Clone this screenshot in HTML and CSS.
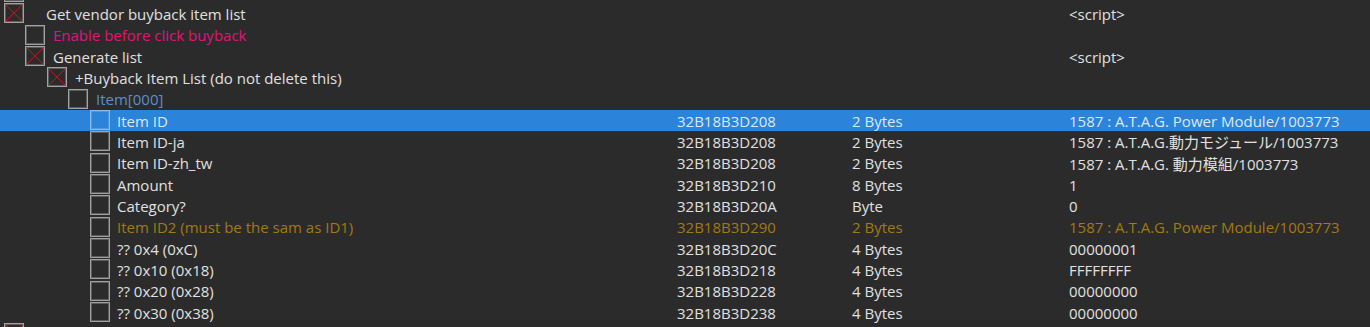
FILE: index.html
```html
<!DOCTYPE html>
<html>
<head>
<meta charset="utf-8">
<link rel="stylesheet" href="styles.css">
</head>
<body>
<div class="view">
  <div class="list">
    <div class="row lv0"><div class="desc"><span class="cb"></span></div><div class="addr"></div><div class="type"></div><div class="val"></div></div>
    <div class="row lv0"><div class="desc"><span class="cb on"></span><span class="name">Get vendor buyback item list</span></div><div class="addr"></div><div class="type"></div><div class="val">&lt;script&gt;</div></div>
    <div class="row lv1"><div class="desc"><span class="cb"></span><span class="name pink">Enable before click buyback</span></div><div class="addr"></div><div class="type"></div><div class="val"></div></div>
    <div class="row lv1"><div class="desc"><span class="cb on"></span><span class="name">Generate list</span></div><div class="addr"></div><div class="type"></div><div class="val">&lt;script&gt;</div></div>
    <div class="row lv2"><div class="desc"><span class="cb on"></span><span class="name">+Buyback Item List (do not delete this)</span></div><div class="addr"></div><div class="type"></div><div class="val"></div></div>
    <div class="row lv3"><div class="desc"><span class="cb"></span><span class="name blue">Item[000]</span></div><div class="addr"></div><div class="type"></div><div class="val"></div></div>
    <div class="row lv4 sel"><div class="desc"><span class="cb"></span><span class="name">Item ID</span></div><div class="addr">32B18B3D208</div><div class="type">2 Bytes</div><div class="val">1587 : A.T.A.G. Power Module/1003773</div></div>
    <div class="row lv4"><div class="desc"><span class="cb"></span><span class="name">Item ID-ja</span></div><div class="addr">32B18B3D208</div><div class="type">2 Bytes</div><div class="val" lang="ja">1587 : A.T.A.G.動力モジュール/1003773</div></div>
    <div class="row lv4"><div class="desc"><span class="cb"></span><span class="name">Item ID-zh_tw</span></div><div class="addr">32B18B3D208</div><div class="type">2 Bytes</div><div class="val tc" lang="zh-TW">1587 : A.T.A.G. 動力模組/1003773</div></div>
    <div class="row lv4"><div class="desc"><span class="cb"></span><span class="name">Amount</span></div><div class="addr">32B18B3D210</div><div class="type">8 Bytes</div><div class="val">1</div></div>
    <div class="row lv4"><div class="desc"><span class="cb"></span><span class="name">Category?</span></div><div class="addr">32B18B3D20A</div><div class="type">Byte</div><div class="val">0</div></div>
    <div class="row lv4 gold"><div class="desc"><span class="cb"></span><span class="name">Item ID2 (must be the sam as ID1)</span></div><div class="addr">32B18B3D290</div><div class="type">2 Bytes</div><div class="val">1587 : A.T.A.G. Power Module/1003773</div></div>
    <div class="row lv4"><div class="desc"><span class="cb"></span><span class="name">?? 0x4 (0xC)</span></div><div class="addr">32B18B3D20C</div><div class="type">4 Bytes</div><div class="val">00000001</div></div>
    <div class="row lv4"><div class="desc"><span class="cb"></span><span class="name">?? 0x10 (0x18)</span></div><div class="addr">32B18B3D218</div><div class="type">4 Bytes</div><div class="val">FFFFFFFF</div></div>
    <div class="row lv4"><div class="desc"><span class="cb"></span><span class="name">?? 0x20 (0x28)</span></div><div class="addr">32B18B3D228</div><div class="type">4 Bytes</div><div class="val">00000000</div></div>
    <div class="row lv4"><div class="desc"><span class="cb"></span><span class="name">?? 0x30 (0x38)</span></div><div class="addr">32B18B3D238</div><div class="type">4 Bytes</div><div class="val">00000000</div></div>
    <div class="row lv0"><div class="desc"><span class="cb on"></span></div><div class="addr"></div><div class="type"></div><div class="val"></div></div>
  </div>
</div>
</body>
</html>
```

FILE: styles.css
```css
html, body {
  margin: 0;
  padding: 0;
  background: #2b2b2b;
}
.view {
  width: 1370px;
  height: 327px;
  overflow: hidden;
  background: #2b2b2b;
  font-family: "Open Sans", "Noto Sans CJK JP", sans-serif;
  font-size: 15px;
  color: #e0e0e0;
}
.list {
  display: flex;
  flex-direction: column;
  margin-top: -18px;
}
.row {
  display: grid;
  grid-template-columns: 677px 175px 217px 1fr;
  height: 21.333px;
  align-items: center;
  white-space: nowrap;
}
.desc {
  display: flex;
  align-items: center;
  height: 100%;
}
.cb {
  flex: none;
  box-sizing: border-box;
  width: 20px;
  height: 20px;
  border: 1px solid #a2a2a2;
  box-shadow: inset 0 0 0 1px #5c5c5c;
  align-self: flex-start;
  margin-right: 8px;
}
.cb.on {
  background:
    linear-gradient(45deg, transparent calc(50% - 0.8px), #b3161c 50%, transparent calc(50% + 0.8px)),
    linear-gradient(-45deg, transparent calc(50% - 0.8px), #b3161c 50%, transparent calc(50% + 0.8px));
}
.lv0 .desc { padding-left: 4px; }
.lv0 .cb { margin-right: 22px; }
.lv1 .desc { padding-left: 25px; }
.lv2 .desc { padding-left: 47px; }
.lv3 .desc { padding-left: 68px; }
.lv4 .desc { padding-left: 90px; }
.lv4 .cb { margin-right: 7px; }
.pink { color: #e0137a; }
.blue { color: #5a8fc9; }
.gold { color: #a27912; }
.sel {
  background: #2b83da;
  color: #dbe9f8;
}
.sel .cb { border-color: #8bbbea; box-shadow: inset 0 0 0 1px #4f98e0; }
.val.tc { font-family: "Open Sans", "Noto Sans CJK TC", sans-serif; }
```
